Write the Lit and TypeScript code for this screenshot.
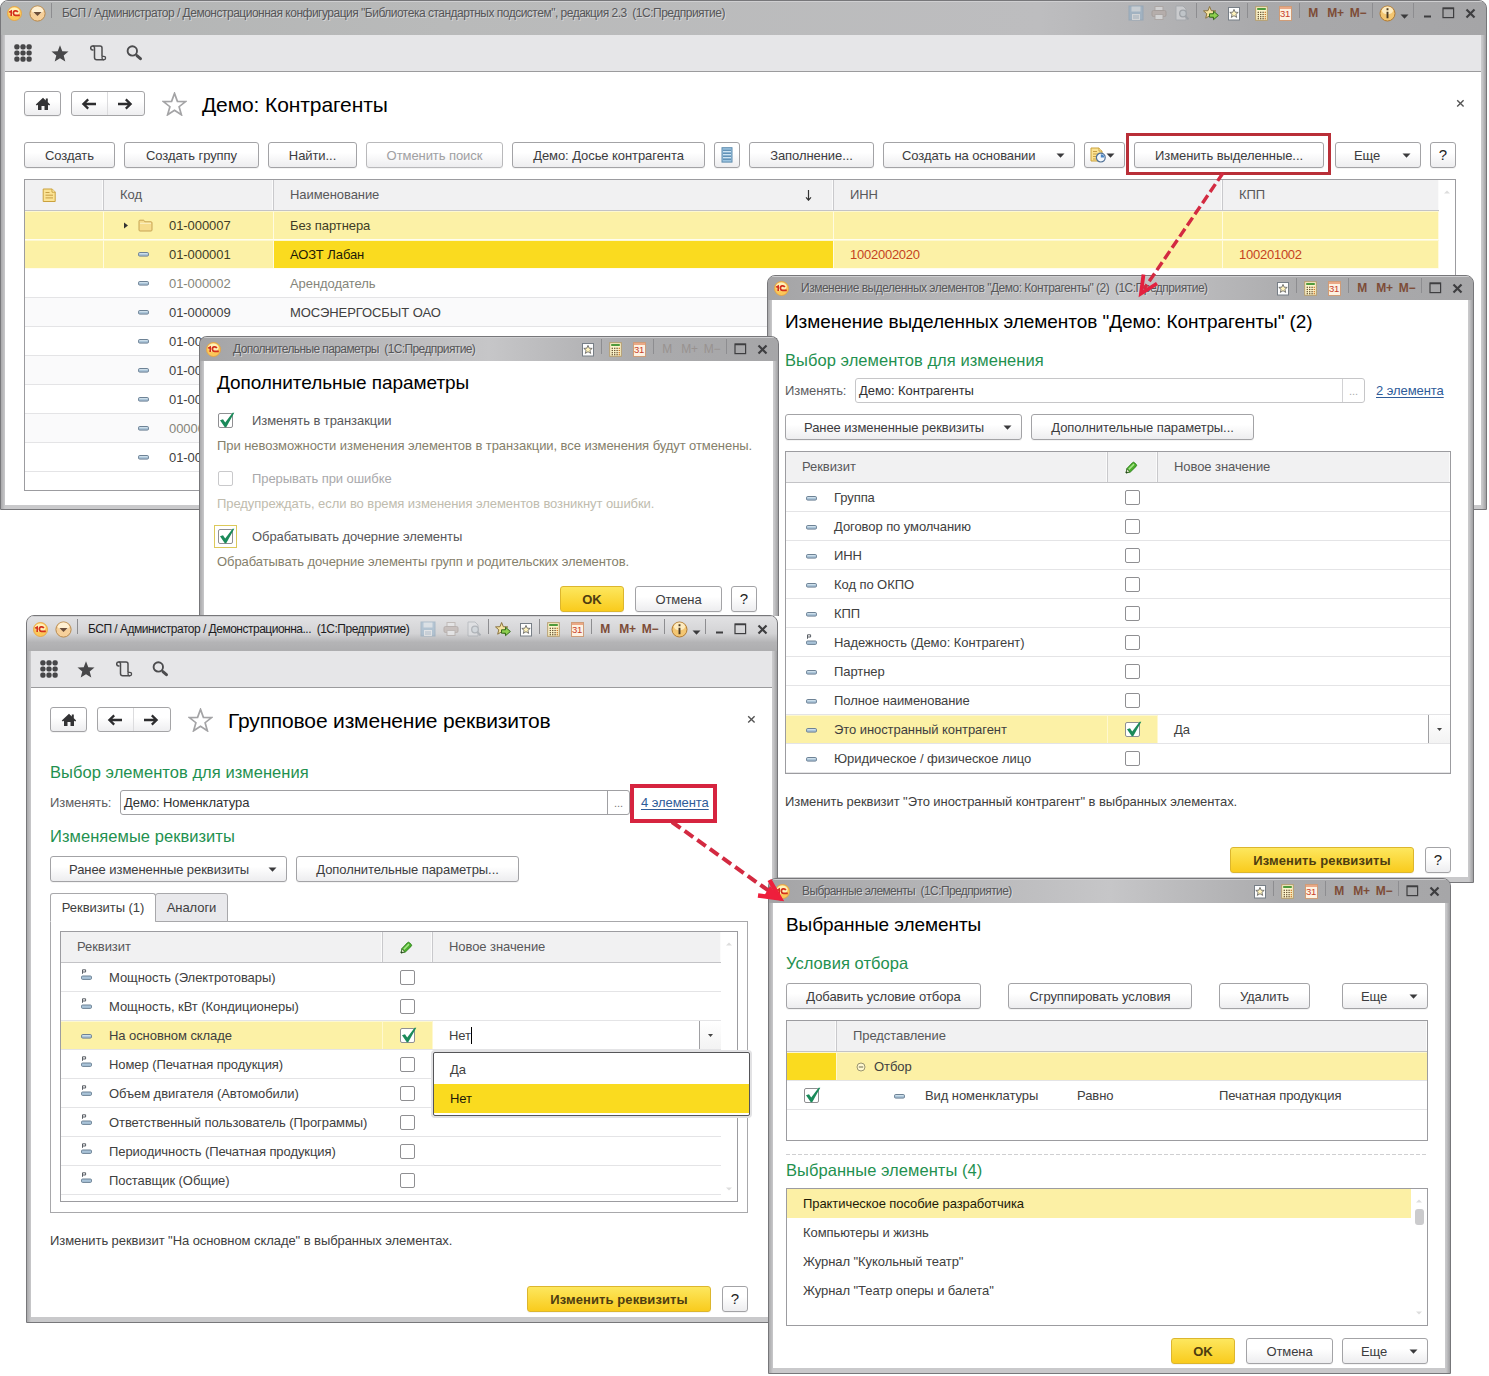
import { LitElement, html, css, svg, nothing, TemplateResult } from "lit";
import { customElement } from "lit/decorators.js";
import { classMap } from "lit/directives/class-map.js";

/* ---------- icons ---------- */

const dash = html`<svg class="ic" width="11" height="5" viewBox="0 0 11 5">
  <rect x="0.5" y="0.5" width="10" height="3.6" rx="1.2" fill="#a9c3d8" stroke="#6d8295"/>
  <path d="M1.5 1.6h8" stroke="#d5e4ee" stroke-width="0.9"/></svg>`;

const flagDash = html`<svg class="ic flag" width="11" height="13" viewBox="0 0 11 13">
  <path d="M1.5 4.8V0.8H4.6V3H1.5" fill="none" stroke="#5a5f66" stroke-width="1"/>
  <rect x="0.5" y="7" width="10" height="3.4" rx="1.1" fill="#a9c3d8" stroke="#6d8295"/></svg>`;

const folder = html`<svg class="ic" width="15" height="13" viewBox="0 0 15 13">
  <path d="M1 2.2q0-1 1-1h3.4q.7 0 1 .8l.4.8H13q1 0 1 1v7.2q0 1-1 1H2q-1 0-1-1z" fill="#f6dc8d" stroke="#c7a455"/>
  <path d="M2 4.3h11" stroke="#fdf2c6"/></svg>`;

const note = html`<svg class="ic" width="15" height="15" viewBox="0 0 15 15">
  <path d="M1.2 1h9l3 3v9.5h-12z" fill="#fbe394" stroke="#caa13d"/>
  <path d="M10 1v3.2h3.2" fill="#fff4c4" stroke="#caa13d"/>
  <path d="M3.5 4.5h4M3.5 7.2h7.5M3.5 9.9h7.5" stroke="#c79f45"/></svg>`;

const noteClock = html`<svg class="ic" width="16" height="16" viewBox="0.5 0 16 16">
  <path d="M1.5 1h8l3 3v10h-11z" fill="#fbe394" stroke="#caa13d"/>
  <path d="M9.5 1v3h3" fill="#fff4c4" stroke="#caa13d"/>
  <path d="M3.5 4.5h4M3.5 7h5M3.5 9.5h3M3.5 12h3" stroke="#c79f45"/>
  <circle cx="11.3" cy="10.6" r="4.4" fill="#f2f7fc" stroke="#4f7096" stroke-width="1.2"/>
  <path d="M11.3 10.6V7.2a3.4 3.4 0 0 1 3.4 3.4z" fill="#4b86c4"/></svg>`;

const sheet = html`<svg class="ic" width="12" height="16" viewBox="0 0 12 16">
  <rect x="1" y="0.7" width="10" height="14.4" fill="#9cc4e0" stroke="#5e8cae"/>
  <path d="M2 3.2h8M2 6.2h8M2 9.2h8M2 12.2h8" stroke="#4f81a8" stroke-width="1.1"/>
  <path d="M2 4.5h8M2 7.5h8M2 10.5h8" stroke="#cfe4f2"/></svg>`;

const pencil = html`<svg class="ic" width="13" height="13" viewBox="0 0 13 13">
  <path d="M1 12l1-4.6L7.6 1.6q.9-.8 1.8 0l1.9 2q.7.8 0 1.6L5.4 11z" fill="#4bb02c" stroke="#2b7d18" stroke-width="0.9"/>
  <path d="M3.8 8.4L9 3.1" stroke="#a5e486" stroke-width="1.5"/>
  <path d="M1 12l1-4.2 2.8 2.9z" fill="#dfe8cc" stroke="#2b5d18" stroke-width="0.7"/>
  <path d="M1 12l.5-1.8 1.3 1.3z" fill="#222"/></svg>`;

const gridIcon = html`<svg class="ic" width="18" height="18" viewBox="0 0 18 18" fill="#474749">
  ${[2.9, 9, 15.1].map(y => [2.9, 9, 15.1].map(x => svg`<rect x=${x - 2.6} y=${y - 2.6} width="5.2" height="5.2" rx="2"/>`))}</svg>`;

const starIcon = html`<svg class="ic" width="18" height="17" viewBox="0 0 18 17">
  <path d="M9 0.3l2.3 5.9 6.2.3-4.8 4 1.6 6.1L9 13.2l-5.3 3.4 1.6-6.1-4.8-4 6.2-.3z" fill="#474749"/></svg>`;

const scrollIcon = html`<svg class="ic scroll-ic" width="17" height="17" viewBox="0 0 17 17" fill="none" stroke="#4c4c4e" stroke-width="1.5">
  <path d="M3.4 4.9H2.6a1.9 1.9 0 1 1 1.9-1.9V12.5q0 2.3 2.3 2.3h7"/>
  <path d="M2.6 1.1H10q2 0 2 2V11.3"/>
  <path d="M12.2 11.3h1.6a1.8 1.8 0 1 1-1.8 1.8z" stroke-width="1.3"/></svg>`;

const searchIcon = html`<svg class="ic" width="16" height="16" viewBox="0 0 16 16" fill="none" stroke="#4c4c4e">
  <circle cx="6.3" cy="5.9" r="4.7" stroke-width="1.9"/>
  <path d="M9.8 9.4l1.6 1.5" stroke-width="1.6"/><path d="M11.2 10.9l3.2 2.8" stroke-width="3" stroke-linecap="round"/></svg>`;

const homeIcon = html`<svg class="ic" width="16" height="14" viewBox="0 0 16 14">
  <path d="M8 0.8L0.8 7.4l1 1.2L3 7.8V13h3.5V9h3v4H13V7.8l1.2.8 1-1.2-2.4-2.2V1.6h-2v1.8z" fill="#333335"/></svg>`;

const arrowIcon = (right: boolean) => html`<svg class="ic" width="16" height="12" viewBox="0 0 16 12">
  <path d=${right ? "M1 6h12M8.8 1.4L13.6 6 8.8 10.6" : "M15 6H3M7.2 1.4L2.4 6l4.8 4.6"} fill="none" stroke="#2d2d2f" stroke-width="2.3"/></svg>`;

const favStar = html`<svg class="ic" width="25" height="24" viewBox="0 0 25 24">
  <path d="M12.5 1.4l2.9 8 8.2.2-6.5 5.1 2.3 8.1-6.9-4.6-6.9 4.6 2.3-8.1L1.4 9.6l8.2-.2z" fill="#fff" stroke="#a4a4a6" stroke-width="1.7"/></svg>`;

const closeSmall = html`<svg class="ic" width="9" height="9" viewBox="0 0 9 9"><path d="M1.2 1.2l6.4 6.4M7.6 1.2L1.2 7.6" stroke="#555" stroke-width="1.4"/></svg>`;

const logo = html`<svg class="ic" width="15" height="15" viewBox="0 0 15 15">
  <circle cx="7.5" cy="7.5" r="7" fill="#fbc75a" stroke="#e9a13b" stroke-width="0.8"/>
  <ellipse cx="7.3" cy="5.6" rx="5.4" ry="4.2" fill="#fff1b8"/>
  <path d="M2.2 6.3l2-1.2v5" fill="none" stroke="#d3301c" stroke-width="1.6"/>
  <path d="M10.8 6.2a2.3 2.3 0 1 0-2 3.2h4" fill="none" stroke="#d3301c" stroke-width="1.7"/></svg>`;

const menuBall = html`<svg class="ic" width="17" height="17" viewBox="0 0 17 17">
  <circle cx="8.5" cy="8.5" r="7.6" fill="#f6d09b" stroke="#b98a4c"/>
  <ellipse cx="8.5" cy="5.4" rx="5.6" ry="3.8" fill="#fff0d2"/>
  <path d="M4.4 7h8.2L8.5 11z" fill="#6b4e3a"/></svg>`;

const saveIcon = html`<svg class="ic faint" width="16" height="16" viewBox="0 0 16 16">
  <rect x="1" y="1" width="14" height="14" fill="#8fb1cc" stroke="#7c9bb5"/><rect x="3.5" y="1.5" width="9" height="5" fill="#dbe6ee"/>
  <rect x="4" y="9" width="8" height="6" fill="#eef2f5"/><path d="M5 11h6M5 13h6" stroke="#8fa9bd"/></svg>`;
const printIcon = html`<svg class="ic faint" width="16" height="16" viewBox="0 0 16 16">
  <rect x="4" y="1.5" width="8" height="5" fill="#eee" stroke="#a79c96"/><rect x="1" y="5.5" width="14" height="6" rx="1.5" fill="#b9aaa3" stroke="#998b84"/>
  <rect x="4" y="9.5" width="8" height="5" fill="#f3f3f3" stroke="#a79c96"/></svg>`;
const previewIcon = html`<svg class="ic faint" width="16" height="16" viewBox="0 0 16 16">
  <path d="M2 1h7l3 3v11H2z" fill="#e4e6e9" stroke="#9da3aa"/><circle cx="9" cy="8.5" r="3.3" fill="#cfd8df" stroke="#8c949c" stroke-width="1.3"/>
  <path d="M11.3 11l3.2 3.4" stroke="#8c949c" stroke-width="2"/></svg>`;
const starArrowIcon = html`<svg class="ic" width="16" height="16" viewBox="0 0 16 16">
  <path d="M6.6 1.5l1.7 4.2 4.5.2-3.4 2.9 1.1 4.4-3.9-2.4-3.9 2.4 1.1-4.4L.5 5.9 5 5.7z" fill="#f6e3a0" stroke="#8b7440"/>
  <path d="M6.5 8.8h4V6.2L15.4 10.5l-4.9 4.2v-2.5h-4z" fill="#8ed04f" stroke="#356b1c"/></svg>`;
const docStarIcon = html`<svg class="ic" width="14" height="15" viewBox="0 0 14 15">
  <rect x="1.5" y="1.5" width="11" height="12.5" fill="#fdfdfd" stroke="#777e86"/>
  <path d="M7 3.4l1.2 2.8 3 .2-2.3 2 .8 3L7 9.7l-2.7 1.7.8-3-2.3-2 3-.2z" fill="#fff3bd" stroke="#5c5c5c" stroke-width="0.8"/></svg>`;
const calcIcon = html`<svg class="ic" width="13" height="15" viewBox="0 0 13 15">
  <rect x="0.7" y="0.7" width="11.6" height="13.6" fill="#fdf5cc" stroke="#b59c6b"/>
  <rect x="2.2" y="2" width="8.6" height="2" fill="#4f9a3c"/>
  ${[6, 8.2, 10.4, 12.4].map(y => [2.6, 5, 7.4].map(x => svg`<rect x=${x} y=${y - 0.3} width="1.4" height="1.2" fill="#6b5638"/>`))}
  ${[6, 8.2, 10.4, 12.4].map(y => svg`<rect x="9.6" y=${y - 0.3} width="1.4" height="1.2" fill="#d07a2a"/>`)}</svg>`;
const calendarIcon = html`<span class="cal"><i></i><b>31</b></span>`;
const infoIcon = html`<svg class="ic" width="17" height="17" viewBox="0 0 17 17">
  <circle cx="8.5" cy="8.5" r="7.5" fill="#f3c672" stroke="#b07a32"/><ellipse cx="8.5" cy="5.5" rx="5.6" ry="3.9" fill="#fdebc0"/>
  <path d="M8.5 3.2v2M8.5 6.8v6.4" stroke="#4b3a24" stroke-width="1.9"/></svg>`;
const caretIcon = html`<svg class="ic" width="9" height="5" viewBox="0 0 9 5"><path d="M0.5 0.4h8L4.5 4.8z" fill="#3a3a3c"/></svg>`;
const minIcon = html`<svg class="ic" width="9" height="12" viewBox="0 0 9 12"><path d="M1 9.5h7" stroke="#3e3e40" stroke-width="2"/></svg>`;
const maxIcon = html`<svg class="ic" width="13" height="12" viewBox="0 0 13 12"><rect x="1" y="1" width="10.6" height="9.6" fill="none" stroke="#3e3e40" stroke-width="1.2"/><path d="M1 1.5h10.6" stroke="#3e3e40" stroke-width="1.6"/></svg>`;
const xIcon = html`<svg class="ic" width="11" height="11" viewBox="0 0 11 11"><path d="M1.5 1.5l8 8M9.5 1.5l-8 8" stroke="#3e3e40" stroke-width="2.2"/></svg>`;
const scrollUp = html`<svg class="up" width="6" height="4" viewBox="0 0 6 4"><path d="M0 3.5h6L3 .5z" fill="#ddd"/></svg>`;
const scrollDown = html`<svg class="down" width="6" height="4" viewBox="0 0 6 4"><path d="M0 .5h6L3 3.5z" fill="#ddd"/></svg>`;

/* ---------- building blocks ---------- */

const cell = (kind: string, content: unknown) => html`<span class="cell ${kind}">${content}</span>`;
const sep = (kind = "") => html`<span class="sep ${kind}"></span>`;

const systemTools = (full: boolean, dimMemory = false) => html`<div class="tools">
  ${full ? html`${cell("w24", saveIcon)}${cell("w22", printIcon)}${cell("w24", previewIcon)}${sep("s6")}${cell("w22", starArrowIcon)}` : nothing}
  ${cell("w24", docStarIcon)}${sep("s3")}${cell("w24", calcIcon)}${cell("w24", calendarIcon)}${sep("s5")}
  <span class=${classMap({ memory: true, dim: dimMemory })}>${cell("w22", "M")}${cell("w23", "M+")}${cell("w22", "M−")}</span>
  ${full ? html`${sep("s8")}${cell("w20", infoIcon)}${cell("w14 low", caretIcon)}${sep("s6")}${cell("w20", minIcon)}` : sep("s4")}
  ${cell("w22", maxIcon)}${cell("w22", xIcon)}
</div>`;

const titleBar = (text: string, full: boolean, dimMemory = false) => html`<div class="titlebar">
  <div class="titlerow">
    <span class="logo">${logo}</span>
    ${full ? html`<span class="ball">${menuBall}</span><span class="sep"></span>` : nothing}
    <span class="caption">${text}</span>
    ${systemTools(full, dimMemory)}
  </div>
</div>`;

const sectionBar = html`<div class="sections">${gridIcon}${starIcon}${scrollIcon}${searchIcon}</div>`;

const navRow = (title: string) => html`<div class="nav">
  <button class="btn home">${homeIcon}</button>
  <div class="pair"><button>${arrowIcon(false)}</button><button>${arrowIcon(true)}</button></div>
  <span class="fav">${favStar}</span>
  <h1>${title}</h1>
  <span class="close">${closeSmall}</span>
</div>`;

const btn = (text: string, size: string) => html`<button class="btn ${size}"><span>${text}</span></button>`;
const menuBtn = (text: string, size: string) => html`<button class="btn menu ${size}"><span>${text}</span>${caretIcon}</button>`;
const help = html`<button class="btn help">?</button>`;

const check = (on: boolean, kind = "") => html`<span class="check ${kind}">${on
  ? html`<svg width="17" height="17" viewBox="0 0 17 17"><path d="M2 8.3l3-1 2.2 3.3L14.6 0.8h1.7L8.2 15.2H6.8z" fill="#1b8a5a"/></svg>` : nothing}</span>`;

interface Attr { name: string; flag?: boolean; value?: string; }

const attrRow = (a: Attr, editing = false) => html`<div class=${classMap({ row: true, current: a.value !== undefined })}>
  <div class="c-name">${a.flag ? flagDash : dash}<span>${a.name}</span></div>
  <div class="c-check">${check(a.value !== undefined)}</div>
  <div class="c-value">${a.value !== undefined
    ? html`<span class=${classMap({ val: true, editing })}>${a.value}</span><span class="drop"><svg width="5" height="3" viewBox="0 0 5 3"><path d="M0 0h5L2.5 3z" fill="#444"/></svg></span>`
    : nothing}</div>
</div>`;

const attrTable = (rows: Attr[], scroll: boolean) => html`<div class=${classMap({ table: true, attrs: true, scroll })}>
  <div class="thead"><div class="c-name">Реквизит</div><div class="c-check">${pencil}</div><div class="c-value">Новое значение</div></div>
  ${rows.map(r => attrRow(r, scroll))}
  ${scroll ? html`${scrollUp}${scrollDown}` : nothing}
</div>`;

const selectField = (value: string, soft: boolean) => html`<div class=${classMap({ field: true, soft })}><span>${value}</span><i>...</i></div>`;

/* ---------- data ---------- */

const contractors = [
  { code: "01-000007", name: "Без партнера", group: true, inn: "", kpp: "", tone: "marked" },
  { code: "01-000001", name: "АОЗТ Лабан", inn: "1002002020", kpp: "100201002", tone: "marked active" },
  { code: "01-000002", name: "Арендодатель", tone: "muted" },
  { code: "01-000009", name: "МОСЭНЕРГОСБЫТ ОАО", tone: "odd" },
  { code: "01-000003", name: "", tone: "" },
  { code: "01-000004", name: "", tone: "odd" },
  { code: "01-000005", name: "", tone: "" },
  { code: "000000001", name: "", tone: "odd muted" },
  { code: "01-000006", name: "", tone: "" },
] as { code: string; name: string; group?: boolean; inn?: string; kpp?: string; tone: string }[];

const contractorAttrs: Attr[] = [
  { name: "Группа" }, { name: "Договор по умолчанию" }, { name: "ИНН" }, { name: "Код по ОКПО" }, { name: "КПП" },
  { name: "Надежность (Демо: Контрагент)", flag: true }, { name: "Партнер" }, { name: "Полное наименование" },
  { name: "Это иностранный контрагент", value: "Да" }, { name: "Юридическое / физическое лицо" },
];

const itemAttrs: Attr[] = [
  { name: "Мощность (Электротовары)", flag: true }, { name: "Мощность, кВт (Кондиционеры)", flag: true },
  { name: "На основном складе", value: "Нет" }, { name: "Номер (Печатная продукция)", flag: true },
  { name: "Объем двигателя (Автомобили)", flag: true }, { name: "Ответственный пользователь (Программы)", flag: true },
  { name: "Периодичность (Печатная продукция)", flag: true }, { name: "Поставщик (Общие)", flag: true },
];

const chosen = ["Практическое пособие разработчика", "Компьютеры и жизнь", 'Журнал "Кукольный театр"', 'Журнал "Театр оперы и балета"'];

@customElement("app-root")
export class AppRoot extends LitElement {
  static styles = css`
    :host { display: block; position: relative; width: 1489px; height: 1376px; overflow: hidden; background: #fff;
      font-family: "Liberation Sans", Arial, sans-serif; font-size: 13px; line-height: 16px; color: #404040; letter-spacing: -0.07px; }
    *, *::before, *::after { box-sizing: border-box; }
    svg { display: block; flex: none; }
    h1, h2, p { margin: 0; font-weight: 400; white-space: nowrap; }
    h1 { font-size: 21px; line-height: 26px; color: #000; letter-spacing: -0.1px; }
    h1.mid { font-size: 19px; line-height: 24px; letter-spacing: -0.06px; }
    h2 { font-size: 16.5px; line-height: 20px; color: #1f9150; letter-spacing: 0.05px; }
    a { color: #2f5c99; text-decoration: underline; white-space: nowrap; text-underline-offset: 2px; }

    /* windows */
    .win { position: absolute; display: flex; flex-direction: column; border: 1px solid #77777a; border-radius: 8px 8px 0 0;
      background: linear-gradient(90deg, #a9a9ab, #c9c9cb 4px, #c9c9cb calc(100% - 4px), #a0a0a2); padding: 0 5px 5px 4px; overflow: hidden; }
    .body { flex: 1; min-height: 0; background: #fff; display: flex; flex-direction: column; }
    .w1 { left: 0; top: 0; width: 1487px; height: 510px; padding-bottom: 4px; }
    .w2 { left: 199px; top: 336px; width: 580px; height: 280px; border-bottom: 0; padding-bottom: 0; }
    .w3 { left: 767px; top: 275px; width: 707px; height: 608px; }
    .w4 { left: 26px; top: 615px; width: 752px; height: 708px; }
    .w5 { left: 768px; top: 878px; width: 683px; height: 496px; }

    .titlebar { flex: none; height: 24px; margin: 0 -5px 0 -4px; background: linear-gradient(90deg, #a4a4a6, #b9b9bb 30%, #c6c6c8 50%, #ababad 75%, #a6a6a8); box-shadow: inset 0 1px #cfcfd1; }
    .w1 .titlebar { height: 34px; background: linear-gradient(90deg, #b2b4b4, #b9baba 30%, #bdbdbf 70%, #a9a9ab 85%, #a5a5a7); }
    .w4 .titlebar { height: 35px; background: linear-gradient(180deg, #e2e2e4, #d3d3d5 50%, #b4b4b6 75%, #adadaf); }
    .titlerow { display: flex; align-items: center; height: 24px; padding-right: 5px; }
    .w4 .titlerow { height: 26px; padding-right: 4px; }
    .logo { width: 33px; padding-left: 6px; flex: none; }
    .w1 .logo { width: 28px; padding-left: 6px; }
    .w4 .logo { width: 28px; padding-left: 6px; }
    .w1 .caption, .w4 .caption { margin-left: 10px; }
    .ball { width: 22px; flex: none; }
    .caption { font-size: 12px; letter-spacing: -0.5px; color: #565658; text-shadow: 1px 1px #d6d6d8; flex: 1; min-width: 0; white-space: pre; margin-left: 0; }
    .w4 .caption { color: #1c1c1e; }
    .w2 .caption, .w5 .caption { letter-spacing: -0.6px; }
    .tools, .memory { display: flex; align-items: center; height: 24px; flex: none; }
    .cell { display: flex; align-items: center; justify-content: center; flex: none; }
    .w24 { width: 24px; } .w23 { width: 23px; } .w22 { width: 22px; } .w20 { width: 20px; } .w14 { width: 14px; }
    .low { padding-top: 7px; }
    .sep { flex: none; width: 1px; height: 15px; margin-bottom: 6px; background: #8d8d90; border-right: 0; }
    .s3 { margin-left: 1px; margin-right: 1px; } .s4 { margin-left: 3px; margin-right: 2px; } .s5 { margin-left: 2px; margin-right: 2px; }
    .s6 { margin-left: 2px; margin-right: 3px; } .s8 { margin-left: 3px; margin-right: 4px; }
    .memory { font-weight: 700; font-size: 12px; color: #7d4c37; letter-spacing: -0.3px; }
    .memory.dim { color: #989290; font-weight: 400; }
    .faint { opacity: 0.5; }
    .cal { display: flex; flex-direction: column; align-items: center; width: 13px; height: 15px; background: #fdf2e2; border: 1px solid #cf9c78; line-height: 10px; }
    .cal i { width: 11px; height: 2px; background: #eaa886; flex: none; }
    .cal b { font-size: 9.5px; font-weight: 400; letter-spacing: -0.4px; color: #c8402a; }

    .sections { flex: none; height: 37px; background: #e6e6e8; border-bottom: 1px solid #9b9b9d; display: flex; align-items: center; padding-left: 9px; gap: 19px; }
    .scroll-ic { margin-left: 2px; }

    /* navigation row */
    .nav { display: flex; align-items: flex-start; height: 25px; flex: none; }
    .home { width: 37px; height: 25px; }
    .pair { display: flex; width: 74px; height: 25px; margin-left: 10px; border: 1px solid #a5a5a7; border-radius: 3px; background: linear-gradient(#fff 40%, #eeeef0); }
    .pair button { flex: 1; border: 0; background: none; padding: 0; display: flex; align-items: center; justify-content: center; }
    .pair button + button { border-left: 1px solid #dcdcde; padding-right: 2px; }
    .fav { margin-left: 17px; width: 25px; margin-top: 1px; }
    .nav h1 { margin: 1px 0 0 15px; flex: 1; }
    .close { width: 9px; margin-top: 8px; }

    /* buttons */
    .btn { font: inherit; letter-spacing: inherit; color: #3c3c3e; height: 26px; flex: none; border: 1px solid #a3a3a6; border-radius: 3px; background: linear-gradient(#fff 40%, #ededef);
      padding: 0; display: flex; align-items: center; justify-content: center; white-space: nowrap; box-shadow: 0 1px #f4f4f4; }
    .btn span { padding-top: 2px; }
    .btn.home { height: 25px; }
    .btn.menu { justify-content: space-between; padding: 0 9px 0 18px; }
    .btn.off { color: #a0a0a2; border-color: #b9b9bb; }
    .btn.primary { font-weight: 700; color: #4e3d10; border-color: #dcb62e; background: linear-gradient(#fde75e, #f9cb1d); letter-spacing: 0.1px; }
    .btn.help { width: 26px; font-size: 15px; color: #222; }
    .b64 { width: 64px; } .b86 { width: 86px; } .b87 { width: 87px; } .b89 { width: 89px; } .b91 { width: 91px; } .b125 { width: 125px; } .b135 { width: 135px; }
    .b137 { width: 137px; } .b184 { width: 184px; } .b190 { width: 190px; } .b192 { width: 192px; } .b193 { width: 193px; } .b195 { width: 195px; } .b223 { width: 223px; } .b237 { width: 237px; }
    .b26 { width: 26px; } .btn.b41 { width: 41px; gap: 0; justify-content: flex-start; padding-left: 5px; }
    .bar { display: flex; gap: 9px; flex: none; }

    /* tables */
    .table { border: 1px solid #9c9ca0; background: #fff; flex: none; overflow: hidden; position: relative; }
    .thead, .row { display: grid; }
    .thead { height: 31px; background: #f1f1f2; border-bottom: 1px solid #c3c3c6; color: #58585a; }
    .thead > div { border-right: 1px solid #c9c9cc; box-shadow: inset -1px 0 #fbfbfb; }
    .thead > div:last-child { border-right: 0; }
    .thead > div, .row > div { display: flex; align-items: center; padding-left: 16px; white-space: nowrap; min-width: 0; }
    .row { height: 29px; border-bottom: 1px solid #e4e4e6; }
    .row.odd { background: #fafafb; }

    .contractors { height: 312px; position: relative; }
    .contractors .thead, .contractors .row { grid-template-columns: 79px 170px 560px 389px 216px; width: 1414px; }
    .contractors .row > div { padding-top: 2px; }
    .contractors .row > div:nth-child(2) { padding-left: 20px; }
    .contractors .tri { width: 14px; flex: none; padding-bottom: 2px; }
    .contractors .mark { width: 31px; flex: none; padding-bottom: 1px; }
    .contractors .muted { color: #85857a; }
    .contractors .marked { border-bottom-color: #fffdf0; }
    .contractors .marked > div { background: #fcf1a6; border-top: 1px solid #fdf8d0; border-right: 1px solid #fffbe0; color: #403d26; padding-top: 1px; }
    .contractors .active > div:nth-child(3) { background: #fadb1f; color: #1d1a08; }
    .contractors .active > div:nth-child(n + 4) { color: #c4421f; letter-spacing: -0.25px; }
    .contractors .thead > div:nth-child(3) { justify-content: space-between; padding-right: 21px; }
    .contractors .thead .note { padding-left: 17px; }
    .up { position: absolute; right: 5px; top: 10px; }
    .down { position: absolute; right: 5px; bottom: 10px; }

    .attrs .thead, .attrs .row { grid-template-columns: 322px 50px 1fr; }
    .attrs.scroll .thead, .attrs.scroll .row { width: 660px; }
    .attrs .row .c-name { padding: 2px 0 0 20px; gap: 17px; }
    .attrs .thead .c-check, .attrs .row .c-check { padding: 0 2px 0 0; justify-content: center; }
    .attrs .row.current .c-name, .attrs .row.current .c-check { background: #fcf1a6; border-top: 1px solid #fdf8d0; border-right: 1px solid #fff8cf; }
    .attrs .row.current .c-name { padding-top: 1px; }
    .attrs .row.current .c-check { padding-right: 1px; }
    .c-value { justify-content: space-between; }
    .row .c-value { border-right: 0; }
    .flag { margin-top: -5px; }
    .val { line-height: 17px; }
    .val.editing { border-right: 1px solid #000; padding-right: 0; }
    .drop { width: 22px; height: 28px; border-left: 1px solid #a0a0a3; background: linear-gradient(#fff, #f3f3f3); display: flex; align-items: center; justify-content: center; }

    .check { width: 15px; height: 15px; border: 1px solid #8f8f92; border-radius: 2px; background: #fff; flex: none; display: block; position: relative; }
    .check svg { margin: -2px 0 0 -1px; }
    .check.pale { border-color: #c9c9cb; }
    .check.focus::after { content: ""; position: absolute; inset: -5px; border: 1px solid #dcc95a; }

    .field { display: flex; height: 25px; border: 1px solid #a0a0a3; border-radius: 3px; color: #303032; }
    .field span { flex: 1; padding-left: 3px; line-height: 23px; white-space: nowrap; }
    .field i { width: 22px; border-left: 1px solid #a0a0a3; text-align: center; font-style: normal; color: #777; line-height: 24px; font-size: 11px; }
    .field.soft { border-color: #c6c6c8; }
    .field.soft i { border-left-color: #d2d2d4; color: #aaa; }
    .choose { display: flex; height: 25px; align-items: center; flex: none; }
    .choose label { width: 70px; color: #5c5c5e; }
    .choose .field { width: 510px; }
    .choose a { margin-left: 11px; }

    /* window contents */
    .w1 .body .nav { margin: 19px 16px 0 19px; }
    .w1 .bar { margin: 26px 0 0 19px; }
    .w1 .bar .shift { margin-left: 2px; }
    .contractors { margin: 11px 25px 0 19px; width: 1432px; }
    .w4 .body .nav { margin: 19px 16px 0 19px; }
    .w4 .nav h1 { letter-spacing: -0.16px; }
    .w4 .pad { padding: 0 0 0 19px; display: flex; flex-direction: column; }
    .w4 h2.a { margin-top: 30px; } .w4 .choose { margin-top: 8px; } .w4 h2.b { margin-top: 11px; } .w4 .pad .bar { margin-top: 10px; }
    .tabs { display: flex; margin-top: 11px; height: 29px; position: relative; z-index: 1; }
    .tabs span { height: 29px; border: 1px solid #a8a8ab; border-radius: 3px 3px 0 0; display: flex; align-items: center; justify-content: center; background: #e9e9ec; width: 73px; }
    .tabs span.on { width: 106px; background: #fff; border-bottom-color: #fff; margin-right: -1px; height: 29px; }
    .panel { margin-top: -1px; width: 698px; height: 292px; border: 1px solid #a8a8ab; padding: 9px; position: relative; }
    .panel .table { height: 271px; width: 678px; }
    .w4 .hint { margin-top: 20px; }
    .foot { display: flex; justify-content: flex-end; gap: 11px; flex: none; }
    .w4 .foot { margin: 37px 24px 0 0; }

    .w3 .body { padding: 10px 17px 0 13px; }
    .w3 h2 { margin-top: 16px; } .w3 .choose { margin-top: 8px; } .w3 .bar { margin-top: 11px; } .w3 .table { margin-top: 11px; width: 666px; height: 323px; }
    .w3 .hint { margin-top: 20px; }
    .w3 .foot { margin-top: 37px; }

    .w2 .body { padding: 10px 16px 0 13px; }
    .w2 .opt { display: flex; align-items: center; height: 16px; gap: 19px; color: #58585a; padding-left: 1px; }
    .w2 .opt > span:last-child { padding-top: 2px; }
    .w2 .opt.first { margin-top: 17px; }
    .w2 .desc { color: #85806b; margin-top: 10px; }
    .w2 .desc + .opt { margin-top: 16px; }
    .w2 .opt.off { color: #a9a9ab; } .w2 .desc.off { color: #c0bcae; }
    .w2 .foot { margin-top: 16px; gap: 11px; }
    .w2 .foot .help { margin-left: -2px; }

    .w5 .body { padding: 10px 18px 0 13px; }
    .w5 h2 { margin-top: 16px; }
    .w5 .bar { margin-top: 10px; gap: 27px; width: 642px; }
    .w5 .bar .last { margin-left: auto; }
    .w5 .cond { margin-top: 11px; width: 642px; height: 121px; }
    .cond .thead, .cond .row { grid-template-columns: 50px 1fr; }
    .cond .row.sel > div { background: #fcf0a5; border-top: 1px solid #fdf8d0; }
    .cond .row.sel > div:first-child { background: #fadb1f; border-right: 1px solid #fff8cf; }
    .cond .row .tree { padding-left: 19px; gap: 8px; padding-top: 1px; }
    .cond .row.leaf > div:first-child { padding-left: 17px; }
    .cond .row.leaf .tree { padding-left: 57px; gap: 0; padding-top: 2px; }
    .cond .leaf .l1 { width: 152px; margin-left: 20px; } .cond .leaf .l2 { width: 142px; }
    .dashline { margin-top: 13px; width: 640px; height: 1px; flex: none; background: repeating-linear-gradient(90deg, #cfcfd1 0 4px, #fff 4px 6px); }
    .w5 h2.two { margin-top: 5px; }
    .list { margin-top: 8px; width: 642px; height: 138px; border: 1px solid #9c9ca0; position: relative; flex: none; }
    .list div { height: 29px; line-height: 30px; padding-left: 16px; width: 624px; }
    .list div.sel { background: #fcf0a5; color: #1d1a08; }
    .thumb { position: absolute; right: 3px; top: 20px; width: 9px; height: 16px; border-radius: 3px; background: #cbcbcd; }
    .w5 .foot { margin-top: 12px; gap: 9px; width: 642px; } .w5 .foot .primary { margin-right: 2px; }

    /* overlays */
    .popup { position: absolute; left: 433px; top: 1052px; width: 317px; height: 64px; background: #fff; border: 1px solid #555558; border-radius: 2px; box-shadow: 0 0 0 2px #e2e2e4; }
    .popup div { height: 31px; line-height: 33px; padding-left: 16px; }
    .popup div.sel { height: 29px; line-height: 29px; background: #fadb1f; color: #1d1a08; }
    .frame { position: absolute; }
    .f1 { left: 1126px; top: 133px; width: 205px; height: 42px; border: 3px solid #b92f38; }
    .f2 { left: 630px; top: 784px; width: 87px; height: 39px; border: 4px solid #d6243f; }
    .arrows { position: absolute; left: 0; top: 0; pointer-events: none; }
  `;

  private mainWindow(): TemplateResult {
    return html`<section class="win w1">
      ${titleBar('БСП / Администратор / Демонстрационная конфигурация "Библиотека стандартных подсистем", редакция 2.3  (1С:Предприятие)', true)}
      ${sectionBar}
      <div class="body">
        ${navRow("Демо: Контрагенты")}
        <div class="bar">
          ${btn("Создать", "b91")}${btn("Создать группу", "b135")}${btn("Найти...", "b89")}${btn("Отменить поиск", "b137 off")}
          ${btn("Демо: Досье контрагента", "b193")}<button class="btn b26">${sheet}</button>${btn("Заполнение...", "b125")}
          ${menuBtn("Создать на основании", "b192")}<button class="btn b41">${noteClock}${caretIcon}</button>
          ${btn("Изменить выделенные...", "b190")}${menuBtn("Еще", "b86 shift")}${help}
        </div>
        <div class="table contractors">
          <div class="thead"><div class="note">${note}</div><div>Код</div><div>Наименование<svg width="7" height="11" viewBox="0 0 7 11"><path d="M3.5 0v10M1 7.4l2.5 2.8L6 7.4" fill="none" stroke="#333" stroke-width="1.2"/></svg></div><div>ИНН</div><div>КПП</div></div>
          ${contractors.map(r => html`<div class="row ${r.tone}">
            <div></div>
            <div><span class="tri">${r.group ? html`<svg width="4" height="7" viewBox="0 0 4 7"><path d="M0 0.5l4 3-4 3z" fill="#333"/></svg>` : nothing}</span><span class="mark">${r.group ? folder : dash}</span>${r.code}</div>
            <div>${r.name}</div><div>${r.inn ?? ""}</div><div>${r.kpp ?? ""}</div>
          </div>`)}
          ${scrollUp}
        </div>
      </div>
    </section>`;
  }

  private bulkWindow(): TemplateResult {
    return html`<section class="win w3">
      ${titleBar('Изменение выделенных элементов "Демо: Контрагенты" (2)  (1С:Предприятие)', false)}
      <div class="body">
        <h1 class="mid">Изменение выделенных элементов "Демо: Контрагенты" (2)</h1>
        <h2>Выбор элементов для изменения</h2>
        <div class="choose"><label>Изменять:</label>${selectField("Демо: Контрагенты", true)}<a>2 элемента</a></div>
        <div class="bar">${menuBtn("Ранее измененные реквизиты", "b237")}${btn("Дополнительные параметры...", "b223")}</div>
        ${attrTable(contractorAttrs, false)}
        <p class="hint">Изменить реквизит "Это иностранный контрагент" в выбранных элементах.</p>
        <div class="foot">${btn("Изменить реквизиты", "b184 primary")}${help}</div>
      </div>
    </section>`;
  }

  private optionsWindow(): TemplateResult {
    return html`<section class="win w2">
      ${titleBar("Дополнительные параметры  (1С:Предприятие)", false, true)}
      <div class="body">
        <h1 class="mid">Дополнительные параметры</h1>
        <div class="opt first">${check(true)}<span>Изменять в транзакции</span></div>
        <p class="desc">При невозможности изменения элементов в транзакции, все изменения будут отменены.</p>
        <div class="opt off">${check(false, "pale")}<span>Прерывать при ошибке</span></div>
        <p class="desc off">Предупреждать, если во время изменения элементов возникнут ошибки.</p>
        <div class="opt">${check(true, "focus")}<span>Обрабатывать дочерние элементы</span></div>
        <p class="desc">Обрабатывать дочерние элементы групп и родительских элементов.</p>
        <div class="foot">${btn("OK", "b64 primary")}${btn("Отмена", "b87")}${help}</div>
      </div>
    </section>`;
  }

  private groupWindow(): TemplateResult {
    return html`<section class="win w4">
      ${titleBar("БСП / Администратор / Демонстрационна...  (1С:Предприятие)", true)}
      ${sectionBar}
      <div class="body">
        ${navRow("Групповое изменение реквизитов")}
        <div class="pad">
          <h2 class="a">Выбор элементов для изменения</h2>
          <div class="choose"><label>Изменять:</label>${selectField("Демо: Номенклатура", false)}<a>4 элемента</a></div>
          <h2 class="b">Изменяемые реквизиты</h2>
          <div class="bar">${menuBtn("Ранее измененные реквизиты", "b237")}${btn("Дополнительные параметры...", "b223")}</div>
          <div class="tabs"><span class="on">Реквизиты (1)</span><span>Аналоги</span></div>
          <div class="panel">${attrTable(itemAttrs, true)}</div>
          <p class="hint">Изменить реквизит "На основном складе" в выбранных элементах.</p>
          <div class="foot">${btn("Изменить реквизиты", "b184 primary")}${help}</div>
        </div>
      </div>
    </section>`;
  }

  private selectionWindow(): TemplateResult {
    return html`<section class="win w5">
      ${titleBar("Выбранные элементы  (1С:Предприятие)", false)}
      <div class="body">
        <h1 class="mid">Выбранные элементы</h1>
        <h2>Условия отбора</h2>
        <div class="bar">${btn("Добавить условие отбора", "b195")}${btn("Сгруппировать условия", "b184")}${btn("Удалить", "b91")}${menuBtn("Еще", "b86 last")}</div>
        <div class="table cond">
          <div class="thead"><div></div><div>Представление</div></div>
          <div class="row sel"><div></div><div class="tree"><svg width="10" height="10" viewBox="0 0 10 10"><circle cx="5" cy="5" r="4" fill="#fff8d0" stroke="#9a9570"/><path d="M2.8 5h4.4" stroke="#6d6a50"/></svg>Отбор</div></div>
          <div class="row leaf"><div>${check(true)}</div><div class="tree">${dash}<span class="l1">Вид номенклатуры</span><span class="l2">Равно</span><span>Печатная продукция</span></div></div>
        </div>
        <div class="dashline"></div>
        <h2 class="two">Выбранные элементы (4)</h2>
        <div class="list">
          ${chosen.map((c, i) => html`<div class=${classMap({ sel: i === 0 })}>${c}</div>`)}
          ${scrollUp}
          <i class="thumb"></i>
          ${scrollDown}
        </div>
        <div class="foot">${btn("OK", "b64 primary")}${btn("Отмена", "b87")}${menuBtn("Еще", "b86")}</div>
      </div>
    </section>`;
  }

  render() {
    return html`
      ${this.mainWindow()}
      ${this.bulkWindow()}
      ${this.optionsWindow()}
      ${this.groupWindow()}
      ${this.selectionWindow()}
      <div class="popup"><div>Да</div><div class="sel">Нет</div></div>
      <div class="frame f1"></div>
      <div class="frame f2"></div>
      <svg class="arrows" width="1489" height="1376" viewBox="0 0 1489 1376" fill="none">
        <path d="M1223 173L1144 289" stroke="#d32a41" stroke-width="3.4" stroke-dasharray="9.5 4"/>
        <path d="M1143.500 274.500L1141 293.500L1157 283.500" stroke="#e3213f" stroke-width="3.8"/>
        <path d="M672 822L776 896" stroke="#d32a41" stroke-width="4" stroke-dasharray="10.500 5"/>
        <path d="M769.500 880L780 898.500L758 895.500" stroke="#ee1f3c" stroke-width="4.500"/>
        <path d="M770 886L782 901L764 896z" fill="#ee1f3c"/>
      </svg>`;
  }
}
